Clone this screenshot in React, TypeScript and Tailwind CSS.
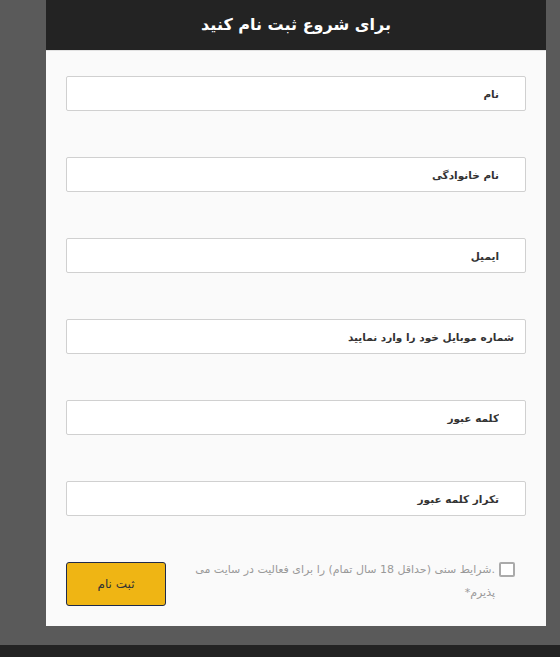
import React from "react";

const FIELDS = [
  { label: "نام", pad: "pr-[26px]" },
  { label: "نام خانوادگی", pad: "pr-[26px]" },
  { label: "ایمیل", pad: "pr-[26px]" },
  { label: "شماره موبایل خود را وارد نمایید", pad: "pr-[11px]" },
  { label: "کلمه عبور", pad: "pr-[26px]" },
  { label: "تکرار کلمه عبور", pad: "pr-[26px]" },
];

export default function App() {
  return (
    <div
      className="min-h-[657px] bg-[#5a5a5a] flex flex-col"
      style={{ fontFamily: '"DejaVu Sans", Tahoma, sans-serif' }}
    >
      <div className="pl-[46px] pb-[19px]">
        <div className="w-[500px] bg-[#fafafa]" dir="rtl">
          <div className="h-[51px] bg-[#232323] border-b border-[#e2e2e2] flex items-center justify-center">
            <h1 className="text-white text-[16px] font-bold">برای شروع ثبت نام کنید</h1>
          </div>

          <form className="px-5 pt-[25px] pb-5 flex flex-col gap-[46px]">
            {FIELDS.map((f) => (
              <input
                key={f.label}
                type={f.label.includes("کلمه") ? "password" : "text"}
                placeholder={f.label}
                className={`h-[35px] w-full bg-white border border-[#d0d0d0] rounded-[2px] ${f.pad} text-right text-[10.5px] font-bold text-[#333] placeholder:text-[#333] outline-none`}
              />
            ))}

            <div className="flex justify-between items-start">
              <label className="flex items-start gap-[4px] w-[316px] mr-[11px]">
                <span className="w-[16px] h-[15px] shrink-0 border-2 border-[#aaa] rounded-[2px] bg-white" />
                <span className="text-[11px] leading-[23px] text-[#999] -mt-[4px]">
                  <span className="whitespace-nowrap">
                    .شرایط سنی (حداقل 18 سال تمام) را برای فعالیت در سایت می
                  </span>
                  <br />
                  پذیرم*
                </span>
              </label>
              <button
                type="button"
                className="w-[100px] h-[44px] bg-[#efb514] border border-[#1f2a4a] rounded-[3px] text-[12px] text-[#333]"
              >
                ثبت نام
              </button>
            </div>
          </form>
        </div>
      </div>
      <div className="h-[12px] bg-[#232323]" />
    </div>
  );
}
